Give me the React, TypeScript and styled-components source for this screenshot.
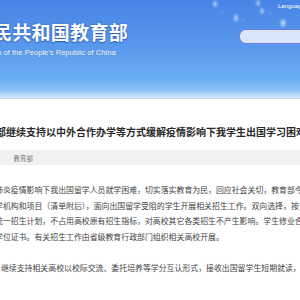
import React from 'react'
import styled, { createGlobalStyle } from 'styled-components'

const GlobalStyle = createGlobalStyle`
  html, body {
    margin: 0;
    padding: 0;
    width: 300px;
    height: 300px;
    overflow: hidden;
    background: #fff;
    font-family: 'Liberation Sans', 'Noto Sans CJK SC', sans-serif;
  }
`

const Header = styled.header`
  position: relative;
  display: flex;
  justify-content: space-between;
  height: 98px;
  border-bottom: 1px solid #c6d2de;
  background: linear-gradient(
    180deg,
    #4884e6 0%,
    #5797ec 45%,
    #6aaef2 80%,
    #8cc2f6 92%,
    #d6e8fb 100%
  );
  overflow: hidden;
`

const Brand = styled.div`
  display: flex;
  flex-direction: column;
  margin-left: -65px;
  padding-top: 21px;
  white-space: nowrap;
`

const BrandName = styled.div`
  font-family: 'Noto Sans CJK SC', sans-serif;
  font-size: 19px;
  font-weight: 700;
  line-height: 22px;
  letter-spacing: 0.3px;
  color: #fff;
  text-shadow: 0 1px 1px #2f5fb0, 0 0 2px rgba(30, 70, 150, 0.6);
`

const BrandSub = styled.div`
  margin-top: 5px;
  margin-left: 58px;
  font-size: 7.6px;
  line-height: 10px;
  color: #fff;
  text-shadow: 0 0 1px rgba(30, 70, 150, 0.5);
`

const Tools = styled.div`
  display: flex;
  flex-direction: column;
  align-items: flex-start;
  width: 61px;
  padding-top: 2px;
  z-index: 1;
`

const LangLink = styled.a`
  margin-left: 39px;
  font-size: 6px;
  line-height: 8px;
  color: #fff;
  text-decoration: none;
  white-space: nowrap;
`

const SearchBox = styled.div`
  margin-top: 19px;
  width: 80px;
  height: 13px;
  border: 1px solid #6e7ed6;
  border-radius: 7px;
  background: #d9e5fa;
`

const Seeds = styled.svg`
  position: absolute;
  top: 0;
  right: 0;
  width: 90px;
  height: 35px;
`

const Article = styled.main`
  display: flex;
  flex-direction: column;
`

const Title = styled.h1`
  margin: 25px 0 0 -4px;
  font-family: 'Noto Sans CJK SC', sans-serif;
  font-size: 10px;
  font-weight: 700;
  line-height: 16px;
  color: #2a2a2a;
  white-space: nowrap;
`

const MetaBar = styled.div`
  display: flex;
  align-items: center;
  gap: 9px;
  margin-top: 10px;
  height: 15px;
  background: #f1f1f1;
  font-family: 'Noto Sans CJK SC', sans-serif;
  font-size: 6.5px;
  color: #777;
  white-space: nowrap;
`

const MetaColon = styled.span`
  margin-left: -2px;
`

const Body = styled.section`
  display: flex;
  flex-direction: column;
  gap: 15.5px;
  margin-top: 17px;
`

const Paragraph = styled.div`
  display: flex;
  flex-direction: column;
`

const Line = styled.div<{ $shift?: number }>`
  margin-left: ${p => p.$shift ?? -5}px;
  font-family: 'Noto Sans CJK SC', sans-serif;
  font-size: 7.9px;
  line-height: 15.5px;
  color: #444;
  white-space: nowrap;
`

const paragraphs = [
  [
    '肺炎疫情影响下我出国留学人员就学困难，切实落实教育为民，回应社会关切，教育部今年',
    '学机构和项目（清单附后），面向出国留学受阻的学生开展相关招生工作。双向选择，按',
    '统一招生计划，不占用高校原有招生指标，对高校其它各类招生不产生影响。学生修业合',
    '学位证书。有关招生工作由省级教育行政部门组织相关高校开展。'
  ],
  ['，继续支持相关高校以校际交流、委托培养等学分互认形式，接收出国留学生短期就读，']
]

export default function App() {
  return (
    <>
      <GlobalStyle />
      <Header>
        <Brand>
          <BrandName>中华人民共和国教育部</BrandName>
          <BrandSub>on of the People&apos;s Republic of China</BrandSub>
        </Brand>
        <Seeds viewBox="0 0 90 35">
          <defs>
            <filter id="blur" x="-50%" y="-50%" width="200%" height="200%">
              <feGaussianBlur stdDeviation="1.2" />
            </filter>
          </defs>
          <g fill="#fff" filter="url(#blur)">
            <ellipse cx="5" cy="4" rx="2" ry="3" opacity="0.5" />
            <ellipse cx="12" cy="12" rx="1" ry="1" opacity="0.4" />
            <ellipse cx="26" cy="18" rx="2" ry="3.5" opacity="0.5" />
            <ellipse cx="33" cy="20" rx="1" ry="1" opacity="0.35" />
            <ellipse cx="48" cy="3" rx="2" ry="3" opacity="0.45" />
            <ellipse cx="52" cy="11" rx="2" ry="3" opacity="0.45" />
            <ellipse cx="60" cy="13" rx="1" ry="1" opacity="0.35" />
            <ellipse cx="73" cy="23" rx="2.5" ry="3.5" opacity="0.55" />
          </g>
        </Seeds>
        <Tools>
          <LangLink href="#">Language</LangLink>
          <SearchBox />
        </Tools>
      </Header>
      <Article>
        <Title>部继续支持以中外合作办学等方式缓解疫情影响下我学生出国学习困难</Title>
        <MetaBar>
          <MetaColon>：</MetaColon>
          <span>教育部</span>
        </MetaBar>
        <Body>
          {paragraphs.map((lines, i) => (
            <Paragraph key={i}>
              {lines.map((text, j) => (
                <Line key={j} $shift={i === 1 ? -7 : -5}>
                  {text}
                </Line>
              ))}
            </Paragraph>
          ))}
        </Body>
      </Article>
    </>
  )
}
